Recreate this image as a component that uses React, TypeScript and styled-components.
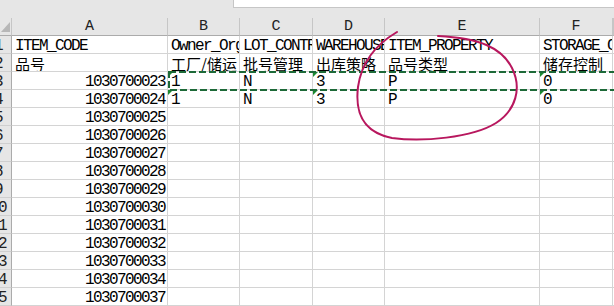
import styled, { createGlobalStyle } from "styled-components";

const GlobalStyle = createGlobalStyle`
  html, body {
    margin: 0;
    padding: 0;
    background: #fff;
    overflow: hidden;
  }
`;

////////////////////////////////////////////////////////////////////////// Data

type Align = "left" | "right";

type CellData = {
  text: string;
  align?: Align;
  flag?: boolean;
};

type RowData = {
  num: number;
  cjk?: boolean;
  cells: CellData[];
};

const COLUMNS = ["A", "B", "C", "D", "E", "F"];

const code = (n: number): RowData => ({
  num: n - 20,
  cells: [{ text: String(1030700000 + n), align: "right" }, { text: "" }, { text: "" }, { text: "" }, { text: "" }, { text: "" }],
});

const ROWS: RowData[] = [
  {
    num: 1,
    cells: [
      { text: "ITEM_CODE" },
      { text: "Owner_Org" },
      { text: "LOT_CONTROL" },
      { text: "WAREHOUSE" },
      { text: "ITEM_PROPERTY" },
      { text: "STORAGE_CONTROL" },
    ],
  },
  {
    num: 2,
    cjk: true,
    cells: [
      { text: "品号" },
      { text: "工厂/储运" },
      { text: "批号管理" },
      { text: "出库策略" },
      { text: "品号类型" },
      { text: "储存控制" },
    ],
  },
  {
    num: 3,
    cells: [
      { text: "1030700023", align: "right" },
      { text: "1", flag: true },
      { text: "N" },
      { text: "3", flag: true },
      { text: "P" },
      { text: "0", flag: true },
    ],
  },
  {
    num: 4,
    cells: [
      { text: "1030700024", align: "right" },
      { text: "1", flag: true },
      { text: "N" },
      { text: "3", flag: true },
      { text: "P" },
      { text: "0", flag: true },
    ],
  },
  code(25),
  code(26),
  code(27),
  code(28),
  code(29),
  code(30),
  code(31),
  code(32),
  code(33),
  code(34),
  { ...code(37), num: 15 },
];

/////////////////////////////////////////////////////////

const Sheet = styled.div`
  position: relative;
  width: 614px;
  height: 306px;
  overflow: hidden;
  background: #fff;
`;

const TopBar = styled.div`
  display: flex;
  height: 18px;
  background: #e6e6e6;
`;

const FormulaBox = styled.div`
  flex: 1;
  margin-left: 233px;
  height: 8px;
  box-sizing: border-box;
  background: #fff;
  border-left: 1px solid #c6c6c6;
  border-bottom: 1px solid #c6c6c6;
`;

const Grid = styled.div`
  display: grid;
  grid-template-columns: 12px 156px 72px 73px 72px 155px 73px 1fr;
  grid-auto-rows: 18px;
`;

/////////////////////////////////////////////////////////

const Corner = styled.div`
  display: flex;
  align-items: flex-end;
  justify-content: flex-end;
  padding: 0 1px 3px 0;
  background: #e6e6e6;
  border-right: 1px solid #c6c6c6;
  border-bottom: 1px solid #ababab;
  box-sizing: border-box;

  svg {
    display: block;
    fill: #b7b7b7;
  }
`;

const ColHead = styled.div`
  box-sizing: border-box;
  background: #e6e6e6;
  border-right: 1px solid #c6c6c6;
  border-bottom: 1px solid #ababab;
  color: #222;
  font: 15px/18px "Liberation Mono", monospace;
  text-align: center;
  overflow: hidden;
`;

// row numbers sit centred in a wider header that is scrolled mostly out of view
const RowHead = styled.div`
  box-sizing: border-box;
  background: #e6e6e6;
  border-right: 1px solid #ababab;
  border-bottom: 1px solid #cfcfcf;
  overflow: hidden;

  span {
    display: block;
    width: 26px;
    margin-left: -15px;
    padding-top: 2px;
    text-align: center;
    color: #222;
    font: 16px/17px "Liberation Mono", monospace;
    letter-spacing: -1.6px;
  }
`;

const Cell = styled.div<{ $align?: Align; $cjk?: boolean; $flag?: boolean }>`
  position: relative;
  box-sizing: border-box;
  padding: ${(p) => (p.$cjk ? "1px 2px 0 3px" : "2px 2px 0 3px")};
  border-right: 1px solid #d4d4d4;
  border-bottom: 1px solid #d4d4d4;
  overflow: hidden;
  white-space: nowrap;
  color: #000;
  text-align: ${(p) => p.$align ?? "left"};
  font-family: ${(p) =>
    p.$cjk ? '"Noto Sans CJK SC", sans-serif' : '"Liberation Mono", monospace'};
  font-size: ${(p) => (p.$cjk ? "15px" : "16px")};
  line-height: 17px;
  letter-spacing: ${(p) => (p.$cjk ? "0" : "-1.6px")};

  &::before {
    content: "";
    display: ${(p) => (p.$flag ? "block" : "none")};
    position: absolute;
    left: 0;
    top: 0;
    border-top: 5px solid #1b8a2f;
    border-right: 5px solid transparent;
  }
`;

const Filler = styled.div`
  border-bottom: 1px solid #d4d4d4;
  box-sizing: border-box;
`;

// copy marquee and the pen loop drawn on top of the grid
const Overlay = styled.svg`
  position: absolute;
  left: 0;
  top: 0;
  pointer-events: none;
`;

/////////////////////////////////////////////////////////

export default function App() {
  return (
    <>
      <GlobalStyle />
      <Sheet>
        <TopBar>
          <FormulaBox />
        </TopBar>
        <Grid>
          <Corner>
            <svg width="9" height="10" viewBox="0 0 9 10">
              <polygon points="9,0 9,10 0,10" />
            </svg>
          </Corner>
          {COLUMNS.map((c) => (
            <ColHead key={c}>{c}</ColHead>
          ))}
          <ColHead />
          {ROWS.map((row) => (
            <Row key={row.num} row={row} />
          ))}
        </Grid>
        <Overlay width="614" height="306" viewBox="0 0 614 306">
          <rect
            x="169"
            y="72"
            width="460"
            height="18"
            fill="none"
            stroke="#1d6a38"
            strokeWidth="2"
            strokeDasharray="7 3"
          />
          <path
            d="M397,32 C380,42 362,58 358,87 C355,112 362,132 392,138 C422,142 472,138 496,123 C516,110 522,88 512,68 C502,48 480,38 438,36"
            fill="none"
            stroke="#b8175e"
            strokeWidth="2"
            strokeLinecap="round"
          />
        </Overlay>
      </Sheet>
    </>
  );
}

const Row = ({ row }: { row: RowData }) => (
  <>
    <RowHead>
      <span>{row.num}</span>
    </RowHead>
    {row.cells.map((c, i) => (
      <Cell key={i} $align={c.align} $cjk={row.cjk} $flag={c.flag}>
        {c.text}
      </Cell>
    ))}
    <Filler />
  </>
);
